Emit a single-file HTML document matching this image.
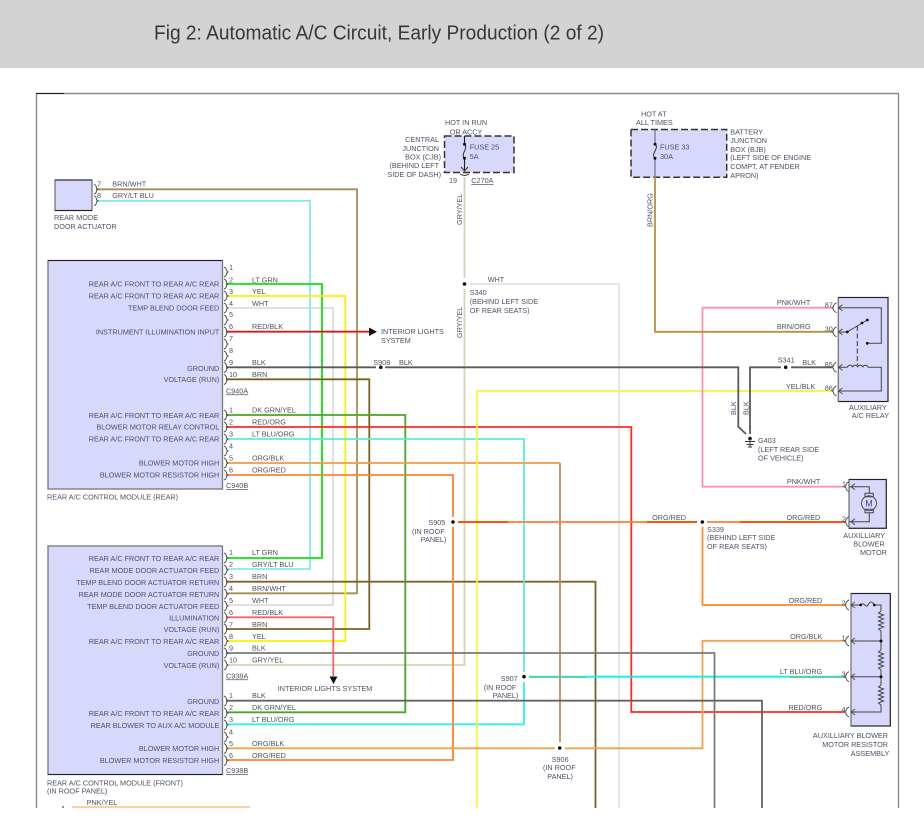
<!DOCTYPE html>
<html><head><meta charset="utf-8"><title>Fig 2: Automatic A/C Circuit</title>
<style>
html,body{margin:0;padding:0;background:#fff;width:924px;height:823px;overflow:hidden}
svg{display:block}
text{font-family:"Liberation Sans",sans-serif;font-size:7.25px;fill:#4e5264}
.t{font-size:20px;fill:#34383e}
.e{text-anchor:end}
.w{fill:none;stroke-width:1.8}
.k{fill:none;stroke:#444;stroke-width:1}
.d{fill:#111}
.u{text-decoration:underline}
</style></head><body>
<svg width="924" height="823" viewBox="0 0 924 823" xmlns="http://www.w3.org/2000/svg">
<defs>
<path id="c" d="M-2.5,-5Q0,-4 0,-1.2L1.6,0L0,1.2Q0,4 -2.5,5" fill="none" stroke="#555" stroke-width="1"/>
<path id="p" d="M3,-5Q0,-3.5 0,-1.2L-1.4,0L0,1.2Q0,3.5 3,5M9,-3L5,0L9,3" fill="none" stroke="#555" stroke-width="1"/>
</defs>
<rect width="924" height="68" fill="#d3d3d3"/>
<text class="t" x="154" y="39.500" textLength="450" lengthAdjust="spacingAndGlyphs">Fig 2: Automatic A/C Circuit, Early Production (2 of 2)</text>

<!-- frame -->
<path d="M36.5,808V93.5H898.5V808" fill="none" stroke="#8a8a8a" stroke-width="1.4"/>
<path d="M36,93.5H64" stroke="#222" stroke-width="1" fill="none"/>

<!-- component boxes -->
<g fill="#d8d8fc" stroke="#777" stroke-width="1.3">
<rect x="55" y="180" width="37" height="30.5"/>
<rect x="48" y="260.5" width="174.500" height="228.500"/>
<rect x="48" y="546" width="174.500" height="228.500"/>
<rect x="838.300" y="297.500" width="49.700" height="104"/>
<rect x="849" y="479.500" width="37.300" height="48.800"/>
<rect x="851" y="593.500" width="39.300" height="132.500"/>
</g>
<path d="M48,260.500H222.500M48,774.500H222.500M55,180H92M55,210.500H92M838.300,297.500H888V401.500H838.300M849,479.500H886.300V528.300H849M851,593.500H890.300V726H851" fill="none" stroke="#222" stroke-width="1"/>
<g fill="#d8d8fc" stroke="#333" stroke-width="1.500" stroke-dasharray="7 3">
<rect x="444.500" y="136" width="69.500" height="36.500"/>
<rect x="631" y="129.500" width="95.700" height="47.800"/>
</g>

<!-- wires -->
<g class="w">
<path class="w" stroke="#e4e4e4" d="M470,284H619V808"/>
<path class="w" stroke="#dddddd" d="M226,308H333V605H226"/>
<path class="w" stroke="#a58d55" d="M96,189.300H357V593.300H226"/>
<path class="w" stroke="#86e8ee" d="M96,200.800H310V569H226"/>
<path class="w" stroke="#10e010" d="M226,284H322V558H226"/>
<path class="w" stroke="#fbf000" d="M226,296H345.300V641H226"/>
<path class="w" stroke="#d4d4b4" d="M226,665H464.500V289M464.500,278V177"/>
<path class="w" stroke="#7a6224" d="M226,379.300H369.300V629H226"/>
<path class="w" stroke="#7a6224" d="M226,581.700H595.500V808"/>
<path class="w" stroke="#45a820" d="M226,415H405.300V712.300H226"/>
<path class="w" stroke="#ff2a20" d="M226,427H631.300V712H845"/>
<path class="w" stroke="#5ceadb" d="M226,439H524V672"/>
<path class="w" stroke="#30f0f0" d="M226,724.300H524V682"/>
<path class="w" stroke="#c58a58" d="M560,742V463"/>
<path class="w" stroke="#f59a45" d="M226,463H560"/>
<path class="w" stroke="#ff8230" d="M226,475H453V517M453,527V760H226"/>
<path class="w" stroke="#fbf140" d="M833,391H477V808"/>
<path class="w" stroke="#ff90b0" d="M833,307.700H702.500V486.700H846"/>
<path class="w" stroke="#b5923f" d="M655,177V331.800H833"/>
<path class="w" stroke="#ff7e30" d="M458,522H697M707,522H846"/>
<path class="w" stroke="#ff4800" d="M458,522H508M647,522H697M740,522H846"/>
<path class="w" stroke="#ff8a2c" d="M702.500,527V605H846"/>
<path class="w" stroke="#f3a050" d="M226,748.300H555M565,748.300H702.500V640.800H846"/>
<path class="w" stroke="#00f4f4" d="M529,676.700H846"/>
<path stroke="#e08a30" stroke-width=".7" fill="none" d="M529,677.500H586M790,677.500H846"/>
<path class="w" stroke="#7a7a7a" d="M226,653H714.500V808"/>
<path class="w" stroke="#636363" d="M226,700.700H762V808"/>
<path class="w" stroke="#5a5a5a" d="M226,367.300H376M385,367.300H738.300V426.700L746,434M750,434V367.300H781M791,367.300H833"/>
<path class="w" stroke="#e01818" d="M226,331.700H369"/>
<path class="w" stroke="#f26464" d="M226,617.300H333.300V676"/>
<path stroke="#f8c080" stroke-width="1.400" fill="none" d="M72,807H250"/>
</g>

<!-- arrows -->
<path class="d" d="M369,327.500L377,331.700L369,336ZM329.500,676.500H337.500L333.500,684Z"/>
<circle class="d" cx="63" cy="807" r=".8"/>

<!-- pin connectors left -->
<use href="#c" x="226.500" y="189.300" transform="translate(-130 0)"/>
<use href="#c" x="96.500" y="200.800"/>
<use href="#c" x="226.500" y="272"/><use href="#c" x="226.500" y="284"/><use href="#c" x="226.500" y="296"/><use href="#c" x="226.500" y="308"/><use href="#c" x="226.500" y="320"/><use href="#c" x="226.500" y="332"/><use href="#c" x="226.500" y="344"/><use href="#c" x="226.500" y="356"/><use href="#c" x="226.500" y="367.500"/><use href="#c" x="226.500" y="379.500"/>
<use href="#c" x="226.500" y="415"/><use href="#c" x="226.500" y="427"/><use href="#c" x="226.500" y="439"/><use href="#c" x="226.500" y="451"/><use href="#c" x="226.500" y="463"/><use href="#c" x="226.500" y="475"/>
<use href="#c" x="226.500" y="558"/><use href="#c" x="226.500" y="570"/><use href="#c" x="226.500" y="582"/><use href="#c" x="226.500" y="594"/><use href="#c" x="226.500" y="606"/><use href="#c" x="226.500" y="617.500"/><use href="#c" x="226.500" y="629"/><use href="#c" x="226.500" y="641"/><use href="#c" x="226.500" y="653"/><use href="#c" x="226.500" y="665"/>
<use href="#c" x="226.500" y="701"/><use href="#c" x="226.500" y="713"/><use href="#c" x="226.500" y="725"/><use href="#c" x="226.500" y="737"/><use href="#c" x="226.500" y="748.500"/><use href="#c" x="226.500" y="760.500"/>

<!-- pin connectors right -->
<use href="#p" x="833.500" y="307.700"/><use href="#p" x="833.500" y="331.800"/><use href="#p" x="833.500" y="367.300"/><use href="#p" x="833.500" y="391"/>
<use href="#p" x="846" y="486.700"/><use href="#p" x="846" y="521.800"/>
<use href="#p" x="846" y="605"/><use href="#p" x="846" y="641"/><use href="#p" x="846" y="676.700"/><use href="#p" x="846" y="712"/>

<!-- fuses -->
<path d="M464.500,136V144M464.500,158V171" stroke="#222" stroke-width="1.100" fill="none"/>
<path d="M464.500,144C469,148 460,154 464.500,158M461,167L464.500,171L468,167M460,174Q464.500,177 469,174" fill="none" stroke="#333" stroke-width="1"/>
<circle class="d" cx="464.500" cy="144.300" r="1.500"/><circle class="d" cx="464.500" cy="158.300" r="1.500"/>
<path d="M655,129.500V144M655,158V177" stroke="#667" stroke-width="1.100" fill="none"/>
<path d="M655,144C660,148 650,154 655,158" fill="none" stroke="#333" stroke-width="1"/>
<circle class="d" cx="655" cy="144.300" r="1.500"/><circle class="d" cx="655" cy="158.300" r="1.500"/>

<!-- splices -->
<g class="d">
<circle cx="464.500" cy="284" r="1.800"/><circle cx="380.800" cy="367.300" r="1.800"/><circle cx="785.700" cy="367.300" r="1.800"/>
<circle cx="453" cy="522" r="1.800"/><circle cx="702.300" cy="522" r="1.800"/><circle cx="524" cy="676.700" r="1.800"/><circle cx="559.700" cy="748" r="1.800"/>
</g>

<!-- ground -->
<circle class="d" cx="750" cy="438.500" r="1.800"/>
<path d="M750,439V447M745,441.500H755M746.500,444.500H753.500M748,447H752" stroke="#333" stroke-width=".9" fill="none"/>

<!-- relay internals -->
<path class="k" d="M838.500,307.700H881.300V343.300H867.300M838.500,332H847L867.300,320M838.500,367.300H847.500M868,367.300H881.300V391H838.500"/>
<path d="M857.300,326V365" stroke="#333" stroke-width="1" stroke-dasharray="5 2.500" fill="none"/>
<path class="k" d="M847.500,367.300a2.600,2.600 0 0 1 5.100,0a2.600,2.600 0 0 1 5.100,0a2.600,2.600 0 0 1 5.100,0a2.600,2.600 0 0 1 5.100,0"/>
<g class="d"><circle cx="847.300" cy="332" r="1.400"/><circle cx="862" cy="323" r="1.400"/><circle cx="867.300" cy="320" r="1.400"/><circle cx="867.300" cy="343.300" r="1.400"/></g>

<!-- motor -->
<path class="k" d="M849,486.700H869.300V493.300M865,493.300H873.300V496.700H865ZM865,509.300H873.300V512.700H865ZM869.300,512.700V521.700H849"/>
<circle cx="869" cy="503.300" r="7.500" fill="none" stroke="#444" stroke-width=".9"/>
<text x="869" y="506.300" text-anchor="middle" style="font-size:9px;fill:#444a80">M</text>

<!-- resistor internals -->
<path class="k" d="M851,605H860.700C864,601 866,609 868,605C870,601 872,601 874.300,605H881V611M881,611l-2.500,2 5,2 -5,2 5,2 -5,2 5,2 -5,2 5,2 -5,2 2.500,2V650M881,650l-2.500,2 5,2 -5,2 5,2 -5,2 5,2 -5,2 5,2 -5,2 2.500,2V685M881,685l-2.500,2 5,2 -5,2 5,2 -5,2 5,2 -5,2 5,2 -5,2 2.500,2V712H851M851,641H881M851,676.700H881"/>
<g class="d"><circle cx="860.700" cy="605" r="1.400"/><circle cx="874.300" cy="605" r="1.400"/><circle cx="881" cy="641" r="1.500"/><circle cx="881" cy="676.700" r="1.500"/></g>

<!-- texts: top-left actuator -->
<text x="97" y="186.300">7</text><text x="97" y="198">8</text>
<text x="112.300" y="186.300">BRN/WHT</text><text x="112.300" y="198">GRY/LT BLU</text>
<text x="54" y="220">REAR MODE</text><text x="54" y="229">DOOR ACTUATOR</text>

<!-- module 1 labels -->
<g class="e">
<text class="e" x="219.300" y="286.700">REAR A/C FRONT TO REAR A/C REAR</text>
<text class="e" x="219.300" y="298.700">REAR A/C FRONT TO REAR A/C REAR</text>
<text class="e" x="219.300" y="310.700">TEMP BLEND DOOR FEED</text>
<text class="e" x="219.300" y="334.700">INSTRUMENT ILLUMINATION INPUT</text>
<text class="e" x="219.300" y="371">GROUND</text>
<text class="e" x="219.300" y="382">VOLTAGE (RUN)</text>
<text class="e" x="219.300" y="418">REAR A/C FRONT TO REAR A/C REAR</text>
<text class="e" x="219.300" y="429.700">BLOWER MOTOR RELAY CONTROL</text>
<text class="e" x="219.300" y="441.700">REAR A/C FRONT TO REAR A/C REAR</text>
<text class="e" x="219.300" y="465.700">BLOWER MOTOR HIGH</text>
<text class="e" x="219.300" y="477.700">BLOWER MOTOR RESISTOR HIGH</text>
<!-- module 2 labels -->
<text class="e" x="219.300" y="561">REAR A/C FRONT TO REAR A/C REAR</text>
<text class="e" x="219.300" y="573">REAR MODE DOOR ACTUATOR FEED</text>
<text class="e" x="219.300" y="585">TEMP BLEND DOOR ACTUATOR RETURN</text>
<text class="e" x="219.300" y="597">REAR MODE DOOR ACTUATOR RETURN</text>
<text class="e" x="219.300" y="609">TEMP BLEND DOOR ACTUATOR FEED</text>
<text class="e" x="219.300" y="620.400">ILLUMINATION</text>
<text class="e" x="219.300" y="632">VOLTAGE (RUN)</text>
<text class="e" x="219.300" y="644">REAR A/C FRONT TO REAR A/C REAR</text>
<text class="e" x="219.300" y="656">GROUND</text>
<text class="e" x="219.300" y="668">VOLTAGE (RUN)</text>
<text class="e" x="219.300" y="704">GROUND</text>
<text class="e" x="219.300" y="716">REAR A/C FRONT TO REAR A/C REAR</text>
<text class="e" x="219.300" y="728">REAR BLOWER TO AUX A/C MODULE</text>
<text class="e" x="219.300" y="751">BLOWER MOTOR HIGH</text>
<text class="e" x="219.300" y="763">BLOWER MOTOR RESISTOR HIGH</text>
</g>

<!-- module 1 pins -->
<text x="229" y="270">1</text><text x="229" y="282.300">2</text><text x="229" y="294">3</text><text x="229" y="306">4</text><text x="229" y="317">5</text><text x="229" y="329">6</text><text x="229" y="341">7</text><text x="229" y="353">8</text><text x="229" y="365">9</text><text x="229" y="377">10</text>
<text class="u" x="226" y="393.400">C940A</text>
<text x="229" y="412.400">1</text><text x="229" y="424.400">2</text><text x="229" y="436.400">3</text><text x="229" y="448.400">4</text><text x="229" y="460.400">5</text><text x="229" y="472.400">6</text>
<text class="u" x="226" y="488">C940B</text>
<text x="252" y="282.300">LT GRN</text><text x="252" y="294">YEL</text><text x="252" y="306">WHT</text><text x="252" y="329">RED/BLK</text><text x="252" y="365">BLK</text><text x="252" y="377">BRN</text>
<text x="252" y="412.400">DK GRN/YEL</text><text x="252" y="424.400">RED/ORG</text><text x="252" y="436.400">LT BLU/ORG</text><text x="252" y="460.400">ORG/BLK</text><text x="252" y="472.400">ORG/RED</text>
<text x="47" y="499.400">REAR A/C CONTROL MODULE (REAR)</text>

<!-- module 2 pins -->
<text x="229" y="555">1</text><text x="229" y="567">2</text><text x="229" y="579">3</text><text x="229" y="591">4</text><text x="229" y="603">5</text><text x="229" y="615">6</text><text x="229" y="627">7</text><text x="229" y="639">8</text><text x="229" y="650.700">9</text><text x="229" y="662.700">10</text>
<text class="u" x="226" y="678.400">C938A</text>
<text x="229" y="698">1</text><text x="229" y="710">2</text><text x="229" y="722">3</text><text x="229" y="734.400">4</text><text x="229" y="746">5</text><text x="229" y="758">6</text>
<text class="u" x="226" y="773">C938B</text>
<text x="252" y="555">LT GRN</text><text x="252" y="567">GRY/LT BLU</text><text x="252" y="579">BRN</text><text x="252" y="591">BRN/WHT</text><text x="252" y="603">WHT</text><text x="252" y="615">RED/BLK</text><text x="252" y="627">BRN</text><text x="252" y="639">YEL</text><text x="252" y="650.700">BLK</text><text x="252" y="662.700">GRY/YEL</text>
<text x="252" y="698">BLK</text><text x="252" y="710">DK GRN/YEL</text><text x="252" y="722">LT BLU/ORG</text><text x="252" y="746">ORG/BLK</text><text x="252" y="758">ORG/RED</text>
<text x="47" y="785.400">REAR A/C CONTROL MODULE (FRONT)</text>
<text x="47" y="793.400">(IN ROOF PANEL)</text>
<text x="86.700" y="805">PNK/YEL</text>

<text x="277.700" y="691">INTERIOR LIGHTS SYSTEM</text>
<text x="381" y="334">INTERIOR LIGHTS</text><text x="381" y="343">SYSTEM</text>
<text x="373.300" y="365">S908</text><text x="399" y="365">BLK</text>

<!-- fuse 25 area -->
<text x="445" y="125">HOT IN RUN</text><text x="449.700" y="134.400">OR ACCY</text>
<text class="e" x="439" y="142">CENTRAL</text><text class="e" x="439" y="151">JUNCTION</text><text class="e" x="441" y="159.700">BOX (CJB)</text><text class="e" x="439" y="168">(BEHIND LEFT</text><text class="e" x="441" y="177">SIDE OF DASH)</text>
<text x="449" y="183">19</text><text class="u" x="471.300" y="183">C270A</text>
<text x="469.700" y="149.400">FUSE 25</text><text x="469.700" y="159">5A</text>
<text transform="translate(461.800,225) rotate(-90)">GRY/YEL</text>
<text transform="translate(461.800,338) rotate(-90)">GRY/YEL</text>
<text x="487.700" y="282">WHT</text>
<text x="469.700" y="295">S340</text><text x="469.700" y="304">(BEHIND LEFT SIDE</text><text x="469.700" y="313">OF REAR SEATS)</text>

<!-- fuse 33 area -->
<text x="641" y="116.400">HOT AT</text><text x="636" y="125">ALL TIMES</text>
<text x="660" y="149.400">FUSE 33</text><text x="660" y="159">30A</text>
<text x="730.300" y="134.400">BATTERY</text><text x="730.300" y="143">JUNCTION</text><text x="730.300" y="152">BOX (BJB)</text><text x="730.300" y="160">(LEFT SIDE OF ENGINE</text><text x="730.300" y="169">COMPT, AT FENDER</text><text x="730.300" y="178">APRON)</text>
<text transform="translate(652.300,227) rotate(-90)">BRN/ORG</text>

<!-- relay -->
<text class="e" x="810.300" y="305">PNK/WHT</text><text x="824.700" y="307.400">87</text>
<text class="e" x="810.700" y="329">BRN/ORG</text><text x="824.700" y="331.400">30</text>
<text x="777.700" y="362.400">S341</text><text x="802.300" y="365">BLK</text><text x="824.700" y="367">85</text>
<text class="e" x="815.300" y="389">YEL/BLK</text><text x="824.700" y="390.400">86</text>
<text x="849" y="410">AUXILIARY</text><text x="851.700" y="418">A/C RELAY</text>
<text transform="translate(736,415) rotate(-90)">BLK</text>
<text transform="translate(748.400,415) rotate(-90)">BLK</text>
<text x="758" y="443">G403</text><text x="758" y="452">(LEFT REAR SIDE</text><text x="758" y="460.400">OF VEHICLE)</text>

<!-- motor text -->
<text class="e" x="820.300" y="484">PNK/WHT</text><text x="842" y="486.400">1</text>
<text class="e" x="820.300" y="520">ORG/RED</text><text x="842" y="521.400">2</text>
<text x="707" y="532">S339</text><text x="707" y="540">(BEHIND LEFT SIDE</text><text x="707" y="549">OF REAR SEATS)</text>
<text x="843.300" y="538">AUXILLIARY</text><text x="853.300" y="546.400">BLOWER</text><text x="860" y="555">MOTOR</text>

<!-- resistor text -->
<text class="e" x="822.300" y="603">ORG/RED</text><text x="841.500" y="605.700">2</text>
<text class="e" x="822.300" y="639">ORG/BLK</text><text x="841.500" y="640.700">1</text>
<text class="e" x="822.300" y="674">LT BLU/ORG</text><text x="841.500" y="676.400">3</text>
<text class="e" x="822.300" y="710">RED/ORG</text><text x="841.500" y="712">4</text>
<text class="e" x="888" y="738">AUXILLIARY BLOWER</text><text class="e" x="888" y="747">MOTOR RESISTOR</text><text class="e" x="889.300" y="756">ASSEMBLY</text>

<!-- splice text -->
<text class="e" x="445.300" y="525">S905</text><text x="412" y="534">(IN ROOF</text><text x="420.700" y="542">PANEL)</text>
<text class="e" x="517.700" y="681">S907</text><text x="483.700" y="690">(IN ROOF</text><text x="492.700" y="698">PANEL)</text>
<text x="551.700" y="762">S906</text><text x="543" y="770">(IN ROOF</text><text x="547.300" y="779">PANEL)</text>
<text class="e" x="686" y="520">ORG/RED</text>
</svg>
</body></html>
